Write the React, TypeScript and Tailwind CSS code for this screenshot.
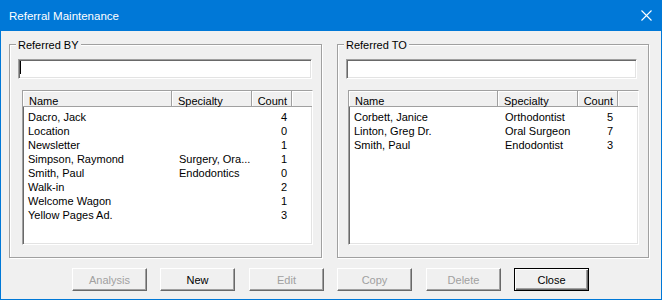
import React from 'react';

type Row = { name: string; specialty: string; count: number };

const referredBy: Row[] = [
  { name: 'Dacro, Jack', specialty: '', count: 4 },
  { name: 'Location', specialty: '', count: 0 },
  { name: 'Newsletter', specialty: '', count: 1 },
  { name: 'Simpson, Raymond', specialty: 'Surgery, Ora...', count: 1 },
  { name: 'Smith, Paul', specialty: 'Endodontics', count: 0 },
  { name: 'Walk-in', specialty: '', count: 2 },
  { name: 'Welcome Wagon', specialty: '', count: 1 },
  { name: 'Yellow Pages Ad.', specialty: '', count: 3 },
];

const referredTo: Row[] = [
  { name: 'Corbett, Janice', specialty: 'Orthodontist', count: 5 },
  { name: 'Linton, Greg Dr.', specialty: 'Oral Surgeon', count: 7 },
  { name: 'Smith, Paul', specialty: 'Endodontist', count: 3 },
];

const sunken =
  'border border-t-[#a0a0a0] border-l-[#a0a0a0] border-r-white border-b-white shadow-[inset_1px_1px_0_#696969,inset_-1px_-1px_0_#e3e3e3]';

interface PanelProps {
  label: string;
  rows: Row[];
  caret?: boolean;
  boxClass: string;
  editClass: string;
  listClass: string;
}

const Panel: React.FC<PanelProps> = ({ label, rows, caret, boxClass, editClass, listClass }) => (
  <div
    className={`relative h-[214px] border border-[#a0a0a0] shadow-[inset_1px_1px_0_#fff,1px_1px_0_#fff] pl-[8px] pt-[14px] ${boxClass}`}
  >
    <span className="absolute left-[6px] -top-[7px] bg-[#f0f0f0] px-[2px]">{label}</span>

    <div className={`h-[20px] bg-white flex items-start pl-[1px] pt-px ${sunken} ${editClass}`}>
      {caret && <span className="block w-px h-[13px] bg-black" />}
    </div>

    <div className={`mt-[11px] h-[155px] bg-white ${sunken} ${listClass}`}>
      <div className="flex h-[16px] bg-[#f0f0f0] border-b border-[#a0a0a0] shadow-[inset_0_1px_0_#fff]">
        <div className="w-[149px] pl-[6px] pt-[3px] border-r border-[#a0a0a0] shadow-[inset_1px_0_0_#fff]">Name</div>
        <div className="w-[80px] pl-[6px] pt-[3px] border-r border-[#a0a0a0] shadow-[inset_1px_0_0_#fff]">Specialty</div>
        <div className="w-[40px] pr-[4px] pt-[3px] text-right border-r border-[#a0a0a0] shadow-[inset_1px_0_0_#fff]">Count</div>
        <div className="flex-1 shadow-[inset_1px_0_0_#fff]" />
      </div>
      <div className="pt-[3px]">
        {rows.map((r) => (
          <div key={r.name} className="flex h-[14px]">
            <div className="w-[149px] pl-[5px] truncate">{r.name}</div>
            <div className="w-[80px] pl-[7px] truncate">{r.specialty}</div>
            <div className="w-[40px] pr-[5px] text-right">{r.count}</div>
          </div>
        ))}
      </div>
    </div>
  </div>
);

const buttons = [
  { label: 'Analysis', enabled: false, cls: 'ml-[71px]' },
  { label: 'New', enabled: true, cls: 'ml-[13px]' },
  { label: 'Edit', enabled: false, cls: 'ml-[14px]' },
  { label: 'Copy', enabled: false, cls: 'ml-[13px]' },
  { label: 'Delete', enabled: false, cls: 'ml-[14px]' },
  { label: 'Close', enabled: true, def: true, cls: 'ml-[13px]' },
];

export default function App() {
  return (
    <div className="w-[662px] h-[300px] bg-[#0078d7] flex flex-col px-px pb-px font-['Liberation_Sans',Arial,sans-serif] text-[11px] leading-[14px] text-black">
      <div className="h-[31px] flex items-center justify-between pl-[8px] pr-[9px] text-white">
        <span className="text-[11.5px]">Referral Maintenance</span>
        <svg width="11" height="11" viewBox="0 0 11 11" className="mb-px">
          <path d="M0.5 0.5 L10.5 10.5 M10.5 0.5 L0.5 10.5" stroke="#fff" strokeWidth="1.1" />
        </svg>
      </div>

      <div className="flex-1 bg-[#f0f0f0] pt-[13px]">
        <div className="flex">
          <Panel
            label="Referred BY"
            rows={referredBy}
            caret
            boxClass="ml-[8px] w-[313px]"
            editClass="w-[294px]"
            listClass="ml-[4px] w-[291px]"
          />
          <Panel
            label="Referred TO"
            rows={referredTo}
            boxClass="ml-[15px] w-[312px]"
            editClass="w-[291px]"
            listClass="ml-[2px] w-[291px]"
          />
        </div>

        <div className="flex mt-[10px]">
          {buttons.map((b) => (
            <button
              key={b.label}
              className={`w-[75px] h-[23px] flex items-center justify-center bg-[#f0f0f0] ${
                b.def
                  ? 'border border-black shadow-[inset_1px_1px_0_#fff,inset_-1px_-1px_0_#696969,inset_-2px_-2px_0_#a0a0a0]'
                  : 'border border-t-white border-l-white border-r-[#696969] border-b-[#696969] shadow-[inset_-1px_-1px_0_#a0a0a0]'
              } ${b.enabled ? 'text-black' : 'text-[#a0a0a0]'} ${b.cls}`}
            >
              {b.label}
            </button>
          ))}
        </div>
      </div>
    </div>
  );
}
